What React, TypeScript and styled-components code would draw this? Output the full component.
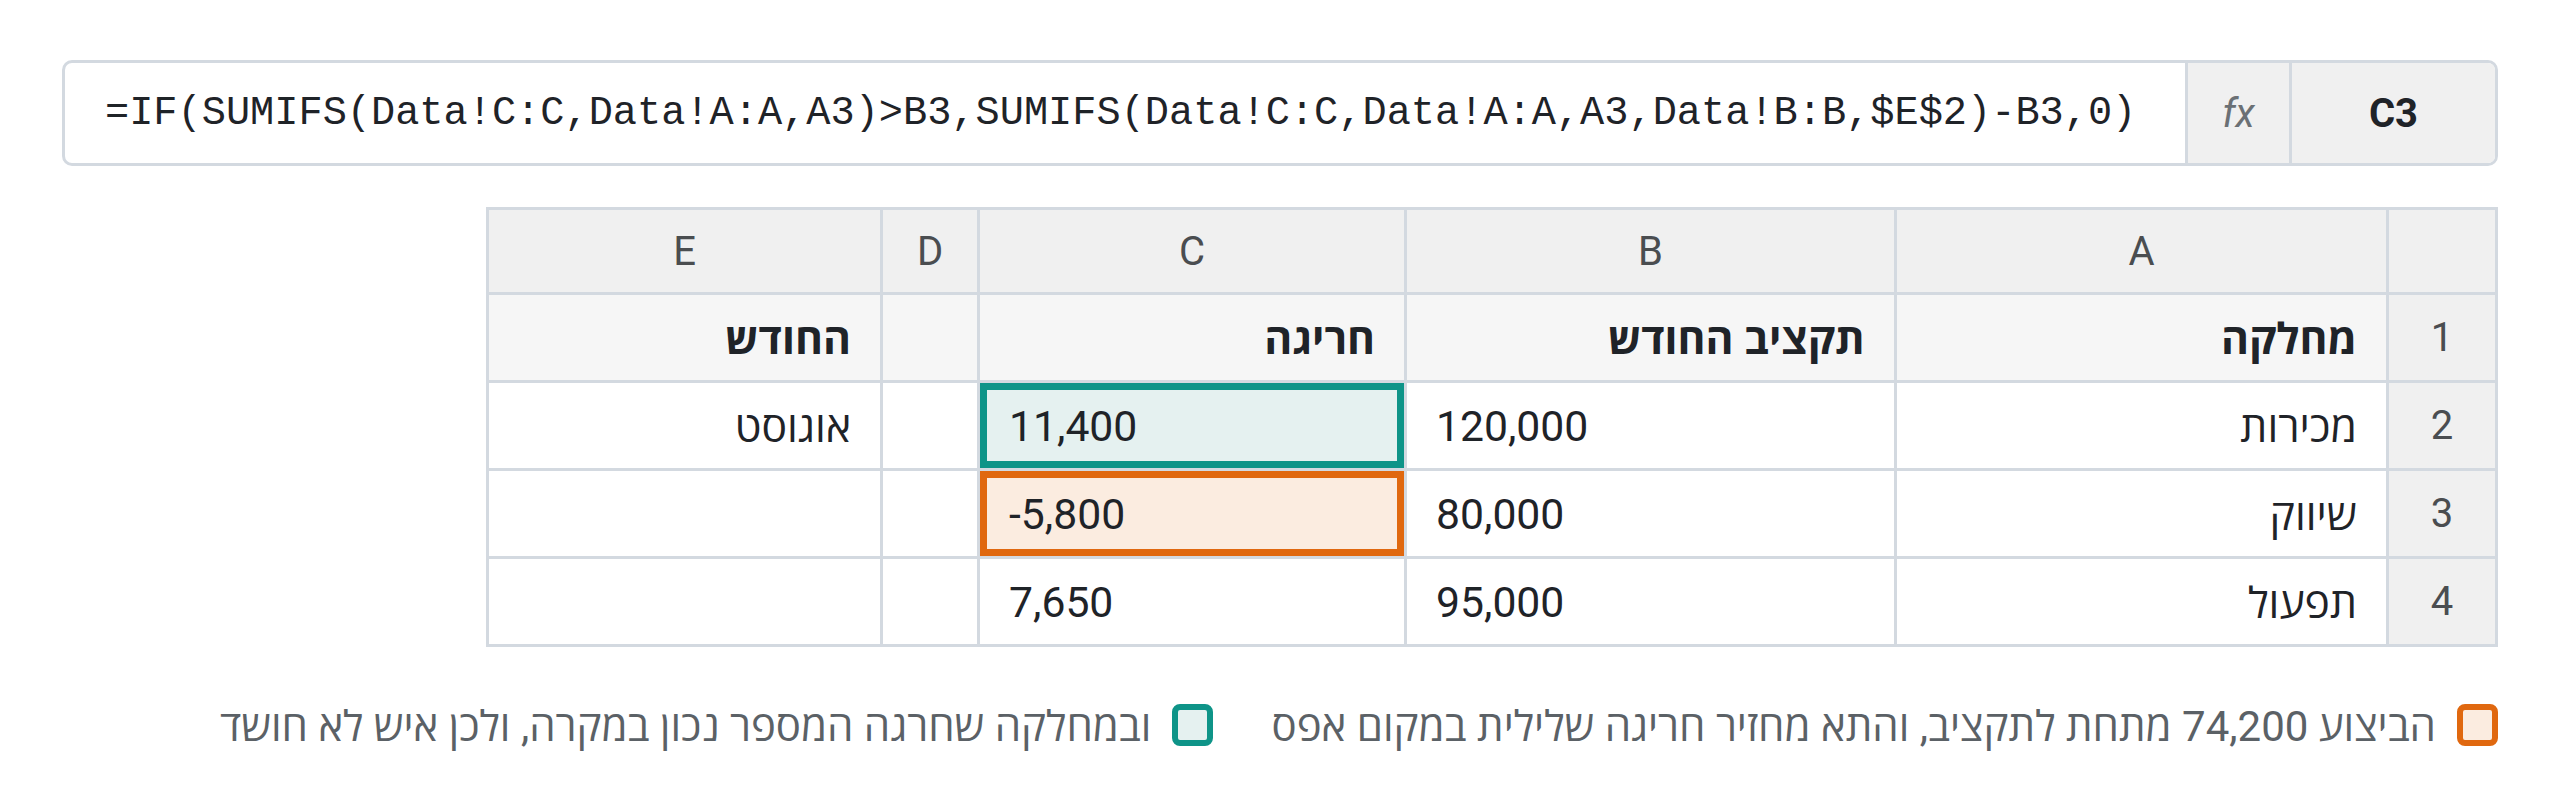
import React from "react";
import styled, { createGlobalStyle, css } from "styled-components";

const GlobalStyle = createGlobalStyle`
  html, body { margin: 0; padding: 0; background: #ffffff; }
  body { font-family: Roboto, "Open Sans", sans-serif; color: #1f2328; }
`;

const BORDER = "#d3d9e0";

const Page = styled.div`
  direction: rtl;
  padding: 60px 62px 40px 62px;
`;

const FormulaBar = styled.div`
  display: flex;
  height: 106px;
  box-sizing: border-box;
  border: 3px solid ${BORDER};
  border-radius: 10px;
  overflow: hidden;
  background: #ffffff;
`;

const NameBox = styled.div`
  width: 203px;
  flex: none;
  display: flex;
  align-items: center;
  justify-content: center;
  background: #f0f0f0;
  font-family: Roboto, sans-serif;
  font-weight: 700;
  font-size: 40px;
  color: #1f2328;
  border-left: 3px solid ${BORDER};
`;

const FxBox = styled.div`
  width: 101px;
  flex: none;
  display: flex;
  align-items: center;
  justify-content: center;
  background: #f0f0f0;
  font-family: Roboto, sans-serif;
  font-style: italic;
  font-size: 40px;
  color: #6b7075;
  border-left: 3px solid ${BORDER};
`;

const FormulaText = styled.div`
  flex: 1;
  direction: ltr;
  display: flex;
  align-items: center;
  padding: 0 40px;
  font-family: "Liberation Mono", monospace;
  font-size: 40.3px;
  color: #1f2328;
  white-space: nowrap;
  overflow: hidden;
`;

const Sheet = styled.div`
  margin-top: 41px;
  display: grid;
  width: max-content;
  grid-template-columns: 106px 489px 487px 424px 94px 391px;
  grid-template-rows: 82px repeat(4, 85px);
  gap: 3px;
  padding: 3px;
  background: ${BORDER};
`;

const ColHeader = styled.div`
  background: #f0f0f0;
  display: flex;
  align-items: center;
  justify-content: center;
  font-size: 40px;
  color: #4a4d50;
`;

const RowNum = styled.div`
  background: #f0f0f0;
  display: flex;
  align-items: center;
  justify-content: center;
  font-size: 40px;
  color: #4a4d50;
`;

type Tone = "teal" | "orange" | undefined;

const Cell = styled.div<{ $bold?: boolean; $num?: boolean; $head?: boolean; $tone?: Tone }>`
  background: ${(p) => (p.$head ? "#f6f6f6" : "#ffffff")};
  display: flex;
  align-items: center;
  padding: 0 29px;
  font-size: 42.7px;
  font-weight: ${(p) => (p.$bold ? 700 : 400)};
  color: #1f2328;
  white-space: nowrap;
  direction: ${(p) => (p.$num ? "ltr" : "rtl")};
  ${(p) =>
    p.$tone === "teal" &&
    css`
      background: #e5f1f0;
      box-shadow: inset 0 0 0 7px #0e9488;
    `}
  ${(p) =>
    p.$tone === "orange" &&
    css`
      background: #fbece0;
      box-shadow: inset 0 0 0 7px #e0680f;
    `}
`;

const Legend = styled.div`
  margin-top: 49px;
  display: flex;
  align-items: center;
  gap: 58px;
`;

const LegendItem = styled.div`
  display: flex;
  align-items: center;
  gap: 21px;
  font-size: 42px;
  color: #5b6166;
  white-space: nowrap;
`;

const Swatch = styled.span<{ $tone: "teal" | "orange" }>`
  width: 41px;
  height: 42px;
  box-sizing: border-box;
  border-radius: 8px;
  flex: none;
  border: 6px solid ${(p) => (p.$tone === "teal" ? "#0e9488" : "#e0680f")};
  background: ${(p) => (p.$tone === "teal" ? "#e5f1f0" : "#fbece0")};
`;

const rows: { n: string; a: string; b: string; c: string; e: string; tone?: Tone }[] = [
  { n: "2", a: "מכירות", b: "120,000", c: "11,400", e: "אוגוסט", tone: "teal" },
  { n: "3", a: "שיווק", b: "80,000", c: "-5,800", e: "", tone: "orange" },
  { n: "4", a: "תפעול", b: "95,000", c: "7,650", e: "" },
];

export default function App() {
  return (
    <>
      <GlobalStyle />
      <Page>
        <FormulaBar>
          <NameBox>C3</NameBox>
          <FxBox>fx</FxBox>
          <FormulaText>
            =IF(SUMIFS(Data!C:C,Data!A:A,A3)&gt;B3,SUMIFS(Data!C:C,Data!A:A,A3,Data!B:B,$E$2)-B3,0)
          </FormulaText>
        </FormulaBar>

        <Sheet>
          <ColHeader />
          <ColHeader>A</ColHeader>
          <ColHeader>B</ColHeader>
          <ColHeader>C</ColHeader>
          <ColHeader>D</ColHeader>
          <ColHeader>E</ColHeader>

          <RowNum>1</RowNum>
          <Cell $head $bold>מחלקה</Cell>
          <Cell $head $bold>תקציב החודש</Cell>
          <Cell $head $bold>חריגה</Cell>
          <Cell $head />
          <Cell $head $bold>החודש</Cell>

          {rows.map((r) => (
            <React.Fragment key={r.n}>
              <RowNum>{r.n}</RowNum>
              <Cell>{r.a}</Cell>
              <Cell $num>{r.b}</Cell>
              <Cell $num $tone={r.tone}>{r.c}</Cell>
              <Cell />
              <Cell>{r.e}</Cell>
            </React.Fragment>
          ))}
        </Sheet>

        <Legend>
          <LegendItem>
            <Swatch $tone="orange" />
            <span>הביצוע 74,200 מתחת לתקציב, והתא מחזיר חריגה שלילית במקום אפס</span>
          </LegendItem>
          <LegendItem>
            <Swatch $tone="teal" />
            <span>ובמחלקה שחרגה המספר נכון במקרה, ולכן איש לא חושד</span>
          </LegendItem>
        </Legend>
      </Page>
    </>
  );
}
